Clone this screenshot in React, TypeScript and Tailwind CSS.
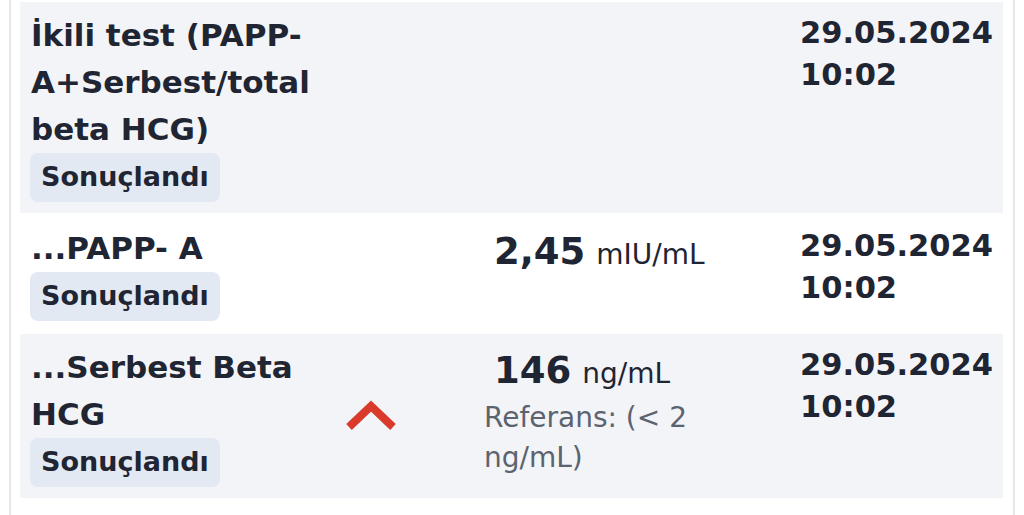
import React from 'react';

type Result = {
  title: string;
  value?: string;
  unit?: string;
  reference?: string;
  high?: boolean;
  date: string;
  time: string;
  shaded: boolean;
};

const results: Result[] = [
  {
    title: 'İkili test (PAPP-A+Serbest/total beta HCG)',
    date: '29.05.2024',
    time: '10:02',
    shaded: true,
  },
  {
    title: '...PAPP- A',
    value: '2,45',
    unit: 'mIU/mL',
    date: '29.05.2024',
    time: '10:02',
    shaded: false,
  },
  {
    title: '...Serbest Beta HCG',
    value: '146',
    unit: 'ng/mL',
    reference: 'Referans: (< 2 ng/mL)',
    high: true,
    date: '29.05.2024',
    time: '10:02',
    shaded: true,
  },
];

const ChevronUp = () => (
  <svg width="50" height="32" viewBox="0 0 50 32" fill="none">
    <polyline points="3,27 25,6 47,27" stroke="#d93a2c" strokeWidth="8" strokeLinecap="butt" strokeLinejoin="miter" />
  </svg>
);

const ResultRow: React.FC<{ r: Result }> = ({ r }) => (
  <div className={`flex pl-[11px] pt-[10px] pb-[11px] ${r.shaded ? 'bg-[#f3f4f7]' : 'bg-white'}`}>
    {/* Test name + status */}
    <div className="w-[304px] shrink-0">
      <div className="text-[31px] leading-[47px] font-bold text-[#1f2532] pr-[4px]">{r.title}</div>
      <div className="inline-flex items-center h-[49px] -ml-[1px] px-[11px] rounded-[8px] bg-[#e3e9f3] text-[27px] font-bold text-[#1f2532]">
        Sonuçlandı
      </div>
    </div>

    {/* Trend arrow */}
    <div className="w-[149px] shrink-0 flex items-center pl-[11px]">
      {r.high && <ChevronUp />}
    </div>

    {/* Value */}
    <div className="w-[316px] shrink-0">
      {r.value && (
        <div className="h-[54px] flex items-baseline pl-[10px] text-[#1f2532]">
          <span className="text-[37px] leading-[54px] font-bold">{r.value}</span>
          <span className="ml-[11px] text-[28px]">{r.unit}</span>
        </div>
      )}
      {r.reference && (
        <div className="text-[28px] leading-[40px] text-[#5c6370] pr-[80px]">{r.reference}</div>
      )}
    </div>

    {/* Date */}
    <div className="flex-1 text-[30.5px] leading-[42px] font-bold text-[#1f2532]">
      <div>{r.date}</div>
      <div>{r.time}</div>
    </div>
  </div>
);

const App: React.FC = () => {
  return (
    <div className="w-[1024px] h-[515px] bg-white overflow-hidden" style={{ fontFamily: '"DejaVu Sans", "Noto Sans", sans-serif' }}>
      <div className="ml-[9px] w-[1006px] h-full border-x-2 border-[#e7e8ea] pl-[9px] pr-[10px] pt-[2px] flex flex-col gap-[2px]">
        {results.map((r, i) => (
          <ResultRow key={i} r={r} />
        ))}
      </div>
    </div>
  );
};

export default App;
